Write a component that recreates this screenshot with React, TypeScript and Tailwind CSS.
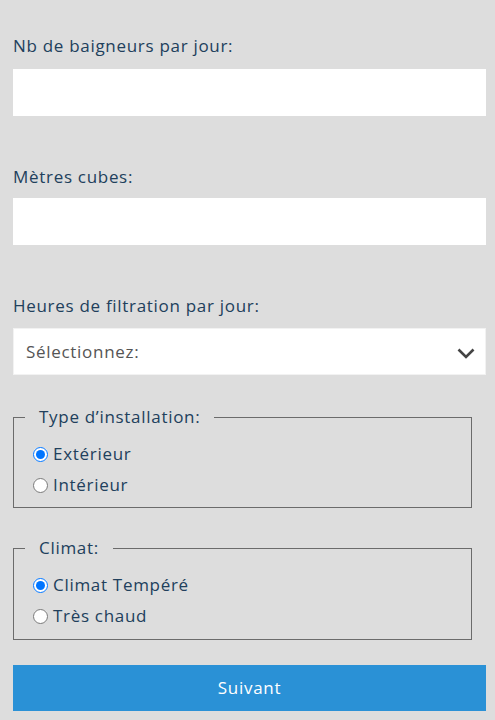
import React from "react";

export default function App() {
  const font = { fontFamily: '"Open Sans", "DejaVu Sans", sans-serif' };
  return (
    <div
      className="min-h-[720px] w-full bg-[#dddddd] pl-[13px] pr-[9px] pt-[34px] text-[17px] leading-[24px] tracking-[0.7px] text-[#21405c]"
      style={font}
    >
      <label className="block h-[24px]">Nb de baigneurs par jour:</label>
      <input
        type="text"
        className="mt-[11px] block h-[47px] w-full bg-white px-[13px] outline-none"
      />

      <label className="mt-[49px] block h-[24px]">Mètres cubes:</label>
      <input
        type="text"
        className="mt-[9px] block h-[47px] w-full bg-white px-[13px] outline-none"
      />

      <label className="mt-[49px] block h-[24px]">Heures de filtration par jour:</label>
      <div className="relative mt-[10px] h-[47px] w-full">
        <select
          className="block h-full w-full appearance-none border border-[#f2f2f2] bg-white pl-[12px] text-[#555555] outline-none"
          defaultValue=""
        >
          <option value="">Sélectionnez:</option>
        </select>
        <svg
          className="pointer-events-none absolute right-[11px] top-[20px]"
          width="18"
          height="11"
          viewBox="0 0 18 11"
        >
          <polyline
            points="1.5,1.5 9,9 16.5,1.5"
            fill="none"
            stroke="#444444"
            strokeWidth="2.6"
          />
        </svg>
      </div>

      <fieldset className="mr-[14px] mt-[30px] border border-[#6b6b6b] px-[11px] pb-[10px]">
        <legend className="px-[14px]">Type d’installation:</legend>
        <div className="mt-[13px] flex flex-col gap-[7px] pl-[8px]">
          <label className="flex h-[24px] items-center gap-[5px]">
            <input type="radio" name="inst" defaultChecked className="h-[15px] w-[15px] accent-[#0075ff]" />
            <span>Extérieur</span>
          </label>
          <label className="flex h-[24px] items-center gap-[5px]">
            <input type="radio" name="inst" className="h-[15px] w-[15px] accent-[#0075ff]" />
            <span>Intérieur</span>
          </label>
        </div>
      </fieldset>

      <fieldset className="mr-[14px] mt-[28px] border border-[#6b6b6b] px-[11px] pb-[11px]">
        <legend className="px-[14px]">Climat:</legend>
        <div className="mt-[13px] flex flex-col gap-[7px] pl-[8px]">
          <label className="flex h-[24px] items-center gap-[5px]">
            <input type="radio" name="clim" defaultChecked className="h-[15px] w-[15px] accent-[#0075ff]" />
            <span>Climat Tempéré</span>
          </label>
          <label className="flex h-[24px] items-center gap-[5px]">
            <input type="radio" name="clim" className="h-[15px] w-[15px] accent-[#0075ff]" />
            <span>Très chaud</span>
          </label>
        </div>
      </fieldset>

      <button
        type="button"
        className="mt-[25px] block h-[46px] w-full bg-[#2a91d6] text-center text-white"
      >
        Suivant
      </button>
    </div>
  );
}
